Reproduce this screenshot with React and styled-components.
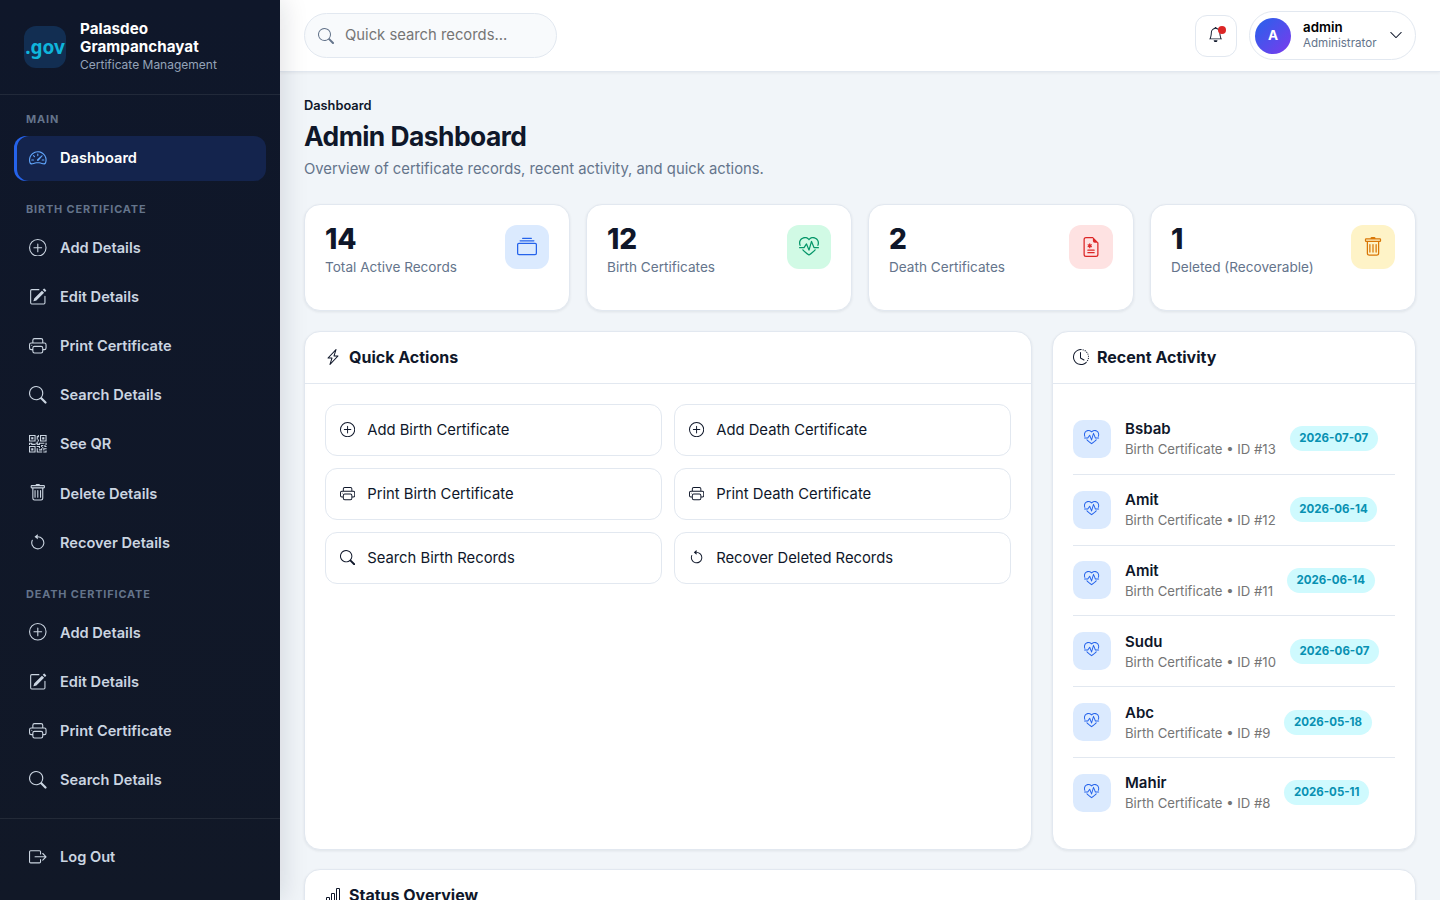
import React from "react";
import styled, { createGlobalStyle, css } from "styled-components";
import {
  BsSpeedometer2, BsPlusCircle, BsPencilSquare, BsPrinter, BsSearch, BsQrCode, BsTrash,
  BsArrowCounterclockwise, BsBoxArrowRight, BsCollection, BsHeartPulse, BsFileEarmarkMedical,
  BsLightningCharge, BsClockHistory, BsBarChart, BsBell, BsChevronDown,
} from "react-icons/bs";

const GlobalStyle = createGlobalStyle`
  *, *::before, *::after { box-sizing: border-box; }
  html, body { margin: 0; height: 100%; overflow: hidden; }
  body {
    background: #f1f5f9;
    color: #0f172a;
    font-family: Inter, "Liberation Sans", sans-serif;
    font-size: 14.8px;
    line-height: 1.5;
  }
  svg { display: block; flex: none; }
`;

const Shell = styled.div`
  display: flex;
  height: 100vh;
  overflow: hidden;
`;

const Sidebar = styled.aside`
  width: 280px;
  flex: none;
  display: flex;
  flex-direction: column;
  background: linear-gradient(180deg, #0f172a 0%, #111827 100%);
  box-shadow: 4px 0 24px rgba(15, 23, 42, 0.12);
  z-index: 2;
`;

const Brand = styled.div`
  display: flex;
  align-items: center;
  gap: 14px;
  height: 95px;
  flex: none;
  padding: 0 24px;
  border-bottom: 1px solid rgba(255, 255, 255, 0.08);
`;

const Logo = styled.div`
  width: 42px;
  height: 42px;
  flex: none;
  border-radius: 12px;
  background: #122e52;
  color: #0fb5dc;
  font: 700 19px/43px "Noto Sans", sans-serif;
  text-align: center;
  overflow: hidden;
  white-space: nowrap;
`;

const BrandName = styled.div`
  color: #fff;
  font-size: 15.2px;
  font-weight: 700;
  line-height: 18.2px;
  letter-spacing: 0.03px;
`;

const BrandSub = styled.div`
  color: #94a3b8;
  font-size: 12px;
  line-height: 18px;
`;

const Nav = styled.nav`
  flex: 1;
  min-height: 0;
  overflow: hidden;
  padding: 0 14px;
`;

const NavLabel = styled.div`
  padding: 16px 12px 8px;
  color: #64748b;
  font-size: 10.9px;
  font-weight: 700;
  line-height: 16.8px;
  letter-spacing: 0.86px;
  text-transform: uppercase;
`;

const NavItem = styled.a`
  display: flex;
  align-items: center;
  gap: 11px;
  height: 45.15px;
  margin-bottom: 4px;
  padding: 0 13px;
  border-radius: 12px;
  color: #cbd5e1;
  font-size: 14.6px;
  font-weight: 600;
  line-height: 22.8px;

  ${(p) => p.$active && css`
    background: #14244d;
    color: #fff;
    box-shadow: inset 3px 0 0 #2563eb;
  `}
`;

const NavIcon = styled.span`
  width: 22px;
  display: flex;
  justify-content: center;
  padding-bottom: 1.6px;
  font-size: 17.6px;
  color: ${(p) => (p.$active ? "#60a5fa" : "inherit")};
`;

const SidebarFooter = styled.div`
  flex: none;
  height: 82px;
  padding: 16px 14px;
  border-top: 1px solid rgba(255, 255, 255, 0.08);
`;

const Main = styled.div`
  flex: 1;
  min-width: 0;
  display: flex;
  flex-direction: column;
`;

const Topbar = styled.header`
  display: flex;
  align-items: center;
  height: 72px;
  flex: none;
  padding: 0 24px;
  background: #fff;
  border-bottom: 1px solid #e2e8f0;
  box-shadow: 0 1px 3px rgba(15, 23, 42, 0.06);
`;

const SearchBox = styled.div`
  display: flex;
  align-items: center;
  gap: 11px;
  width: 253px;
  height: 45px;
  padding: 0 13px;
  border: 1px solid #e2e8f0;
  border-radius: 999px;
  background: #f8fafc;
  color: #757575;

  svg { color: #64748b; font-size: 16px; }
`;

const TopActions = styled.div`
  display: flex;
  align-items: center;
  gap: 12px;
  margin-left: auto;
`;

const BellButton = styled.div`
  position: relative;
  width: 42px;
  height: 42px;
  display: grid;
  place-items: center;
  border: 1px solid #e2e8f0;
  border-radius: 12px;
  background: #fff;
  font-size: 15.2px;
  padding-bottom: 2px;
`;

const BellDot = styled.span`
  position: absolute;
  top: 10px;
  right: 10px;
  width: 8px;
  height: 8px;
  border-radius: 50%;
  background: #dc2626;
`;

const Profile = styled.div`
  display: flex;
  align-items: center;
  width: 167px;
  height: 49px;
  padding: 0 12px 0 5px;
  border: 1px solid #e2e8f0;
  border-radius: 999px;
  background: #fff;

  > svg { margin: 0 0 2px auto; font-size: 14px; }
`;

const Avatar = styled.div`
  width: 36px;
  height: 36px;
  display: grid;
  place-items: center;
  margin-right: 12px;
  border-radius: 50%;
  background: linear-gradient(135deg, #2563eb, #7c3aed);
  color: #fff;
  font-size: 13.6px;
  font-weight: 700;
`;

const ProfileName = styled.div`
  color: #000;
  font-size: 13.3px;
  font-weight: 600;
  line-height: 16px;
`;

const ProfileRole = styled.div`
  color: #64748b;
  font-size: 11.6px;
  line-height: 17px;
`;

const ProfileText = styled.div`
  padding-bottom: 1px;
`;

const Content = styled.main`
  padding: 24px 24px 0;
`;

const Crumb = styled.div`
  font-size: 12.8px;
  font-weight: 600;
  line-height: 20px;
`;

const Title = styled.h1`
  margin: 2px 0 0;
  font-size: 26.4px;
  font-weight: 700;
  line-height: 36px;
  letter-spacing: -0.53px;
`;

const Subtitle = styled.p`
  margin: 4px 0 22.5px;
  color: #64748b;
  line-height: 23.5px;
`;

const cardFrame = css`
  border: 1px solid #e2e8f0;
  border-radius: 16px;
  background: #fff;
  box-shadow: 0 1px 3px rgba(15, 23, 42, 0.08);
`;

const Stats = styled.section`
  display: grid;
  grid-template-columns: repeat(4, 1fr);
  gap: 16px;
  margin-bottom: 20px;
`;

const StatCard = styled.div`
  ${cardFrame}
  display: flex;
  justify-content: space-between;
  align-items: flex-start;
  height: 107px;
  padding: 20px;
`;

const StatValue = styled.div`
  font-size: 28px;
  font-weight: 800;
  line-height: 28px;
`;

const StatLabel = styled.div`
  margin-top: 4px;
  color: #64748b;
  font-size: 13.6px;
  line-height: 20.4px;
`;

const tones = {
  blue: ["#dbeafe", "#2563eb"],
  green: ["#d1fae5", "#059669"],
  red: ["#fee2e2", "#dc2626"],
  amber: ["#fef3c7", "#d97706"],
};

const StatIcon = styled.div`
  width: 44px;
  height: 44px;
  display: grid;
  place-items: center;
  border-radius: 12px;
  font-size: 20px;
  background: ${(p) => tones[p.$tone][0]};
  color: ${(p) => tones[p.$tone][1]};
`;

const Panels = styled.section`
  display: grid;
  grid-template-columns: 728px 364px;
  gap: 20px;
  height: 518px;
  margin-bottom: 20px;
`;

const Panel = styled.section`
  ${cardFrame}
`;

const PanelHeader = styled.h2`
  display: flex;
  align-items: center;
  gap: 8px;
  height: 52px;
  margin: 0;
  padding: 0 20px 2px;
  border-bottom: 1px solid #e2e8f0;
  font-size: 16px;
  font-weight: 700;
  line-height: 24px;
`;

const ActionGrid = styled.div`
  display: grid;
  grid-template-columns: 1fr 1fr;
  gap: 12px;
  padding: 20px;
`;

const Action = styled.a`
  display: flex;
  align-items: center;
  gap: 12px;
  height: 52px;
  padding: 0 14px;
  border: 1px solid #e2e8f0;
  border-radius: 12px;

  svg { margin-bottom: 1px; font-size: 15.2px; }
`;

const ActivityList = styled.div`
  padding: 20px;
`;

const ActivityRow = styled.div`
  display: flex;
  align-items: center;
  gap: 14px;
  height: 70.8px;
  border-bottom: 1px solid #e2e8f0;

  &:last-child { border-bottom-color: transparent; }
`;

const ActivityIcon = styled.div`
  width: 38px;
  height: 38px;
  display: grid;
  place-items: center;
  padding-bottom: 3px;
  border-radius: 10px;
  background: #dbeafe;
  color: #2563eb;
  font-size: 15.2px;
`;

const ActivityName = styled.div`
  font-size: 15px;
  font-weight: 600;
  line-height: 22px;
`;

const ActivityMeta = styled.div`
  color: #757575;
  font-size: 13.15px;
  line-height: 19px;
  white-space: nowrap;
`;

const DatePill = styled.span`
  padding: 0 9.6px;
  border-radius: 999px;
  background: #cffafe;
  color: #0891b2;
  font-size: 11.5px;
  font-weight: 700;
  line-height: 25px;
  white-space: nowrap;
`;

const birthNav = [
  ["Add Details", BsPlusCircle],
  ["Edit Details", BsPencilSquare],
  ["Print Certificate", BsPrinter],
  ["Search Details", BsSearch],
  ["See QR", BsQrCode],
  ["Delete Details", BsTrash],
  ["Recover Details", BsArrowCounterclockwise],
];

const stats = [
  ["14", "Total Active Records", BsCollection, "blue"],
  ["12", "Birth Certificates", BsHeartPulse, "green"],
  ["2", "Death Certificates", BsFileEarmarkMedical, "red"],
  ["1", "Deleted (Recoverable)", BsTrash, "amber"],
];

const actions = [
  ["Add Birth Certificate", BsPlusCircle],
  ["Add Death Certificate", BsPlusCircle],
  ["Print Birth Certificate", BsPrinter],
  ["Print Death Certificate", BsPrinter],
  ["Search Birth Records", BsSearch],
  ["Recover Deleted Records", BsArrowCounterclockwise],
];

const activity = [
  ["Bsbab", 13, "2026-07-07"],
  ["Amit", 12, "2026-06-14"],
  ["Amit", 11, "2026-06-14"],
  ["Sudu", 10, "2026-06-07"],
  ["Abc", 9, "2026-05-18"],
  ["Mahir", 8, "2026-05-11"],
];

function NavLink({ label, icon: Icon, active }) {
  return (
    <NavItem $active={active}>
      <NavIcon $active={active}><Icon /></NavIcon>
      {label}
    </NavItem>
  );
}

export default function App() {
  return (
    <Shell>
      <GlobalStyle />
      <Sidebar>
        <Brand>
          <Logo>.gov</Logo>
          <div>
            <BrandName>Palasdeo<br />Grampanchayat</BrandName>
            <BrandSub>Certificate Management</BrandSub>
          </div>
        </Brand>
        <Nav>
          <NavLabel>Main</NavLabel>
          <NavLink label="Dashboard" icon={BsSpeedometer2} active />
          <NavLabel>Birth Certificate</NavLabel>
          {birthNav.map(([label, icon]) => <NavLink key={label} label={label} icon={icon} />)}
          <NavLabel>Death Certificate</NavLabel>
          {birthNav.slice(0, 4).map(([label, icon]) => <NavLink key={label} label={label} icon={icon} />)}
        </Nav>
        <SidebarFooter>
          <NavLink label="Log Out" icon={BsBoxArrowRight} />
        </SidebarFooter>
      </Sidebar>
      <Main>
        <Topbar>
          <SearchBox><BsSearch />Quick search records...</SearchBox>
          <TopActions>
            <BellButton><BsBell /><BellDot /></BellButton>
            <Profile>
              <Avatar>A</Avatar>
              <ProfileText>
                <ProfileName>admin</ProfileName>
                <ProfileRole>Administrator</ProfileRole>
              </ProfileText>
              <BsChevronDown />
            </Profile>
          </TopActions>
        </Topbar>
        <Content>
          <Crumb>Dashboard</Crumb>
          <Title>Admin Dashboard</Title>
          <Subtitle>Overview of certificate records, recent activity, and quick actions.</Subtitle>
          <Stats>
            {stats.map(([value, label, Icon, tone]) => (
              <StatCard key={label}>
                <div>
                  <StatValue>{value}</StatValue>
                  <StatLabel>{label}</StatLabel>
                </div>
                <StatIcon $tone={tone}><Icon /></StatIcon>
              </StatCard>
            ))}
          </Stats>
          <Panels>
            <Panel>
              <PanelHeader><BsLightningCharge />Quick Actions</PanelHeader>
              <ActionGrid>
                {actions.map(([label, Icon]) => <Action key={label}><Icon />{label}</Action>)}
              </ActionGrid>
            </Panel>
            <Panel>
              <PanelHeader><BsClockHistory />Recent Activity</PanelHeader>
              <ActivityList>
                {activity.map(([name, id, date]) => (
                  <ActivityRow key={id}>
                    <ActivityIcon><BsHeartPulse /></ActivityIcon>
                    <div>
                      <ActivityName>{name}</ActivityName>
                      <ActivityMeta>{`Birth Certificate • ID #${id}`}</ActivityMeta>
                    </div>
                    <DatePill>{date}</DatePill>
                  </ActivityRow>
                ))}
              </ActivityList>
            </Panel>
          </Panels>
          <Panel>
            <PanelHeader><BsBarChart />Status Overview</PanelHeader>
          </Panel>
        </Content>
      </Main>
    </Shell>
  );
}
